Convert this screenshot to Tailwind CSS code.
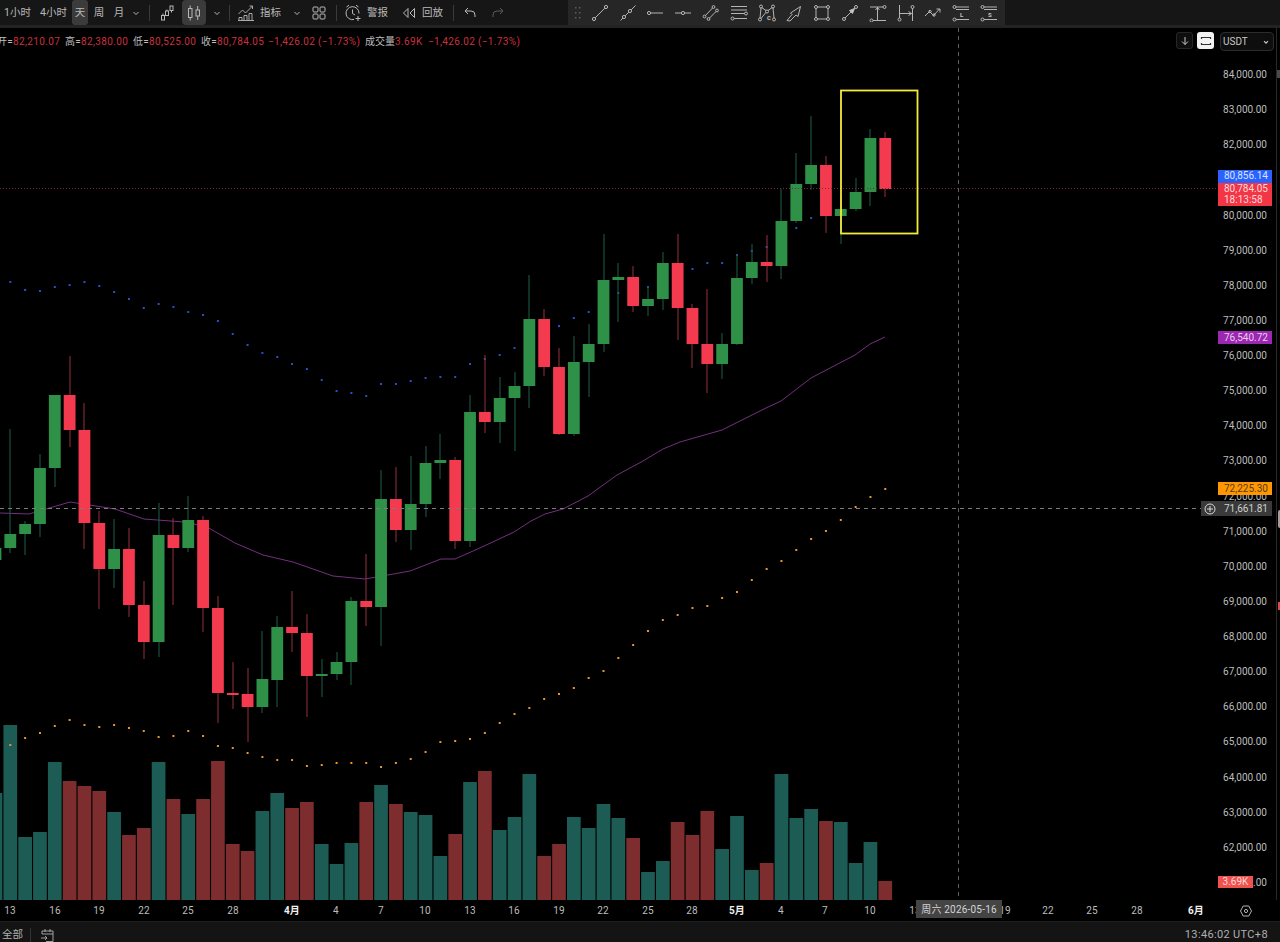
<!DOCTYPE html>
<html lang="en">

<head>
    <meta charset="UTF-8">
    <title>BTC chart</title>
    <script src="https://cdn.jsdelivr.net/npm/@tailwindcss/browser@4"></script>
</head>

<body class="bg-black">
    <div class="relative w-[1280px] h-[942px] overflow-hidden bg-black flex flex-col font-['Roboto','Noto_Sans_CJK_SC',sans-serif] text-[#b8b8b8]">

        <!-- top toolbar -->
        <header class="h-[28px] shrink-0 bg-[#161616] border-b-[3px] border-[#232323] flex items-start text-[10.5px] leading-[25px]">
            <div class="w-[568px] h-[25px] flex items-center pl-[4px]">
                <span class="w-[26px] whitespace-nowrap">1小时</span>
                <span class="ml-[10px] w-[26px] whitespace-nowrap">4小时</span>
                <span class="ml-[6px] w-[16px] h-[25px] bg-[#3b3b3b] rounded-[3px] text-center">天</span>
                <span class="ml-[4px] w-[14px] text-center">周</span>
                <span class="ml-[6px] w-[14px] text-center">月</span>
                <svg class="ml-[5px] w-[10px] h-[10px]" viewBox="0 0 10 10" fill="none" stroke="currentColor"><path d="M2.5 4l2.5 2.5L7.5 4" /></svg>
                <span class="ml-[8px] w-px h-[16px] bg-[#3a3a3a]"></span>
                <svg class="ml-[9px] w-[16px] h-[18px]" viewBox="0 0 16 18" fill="none" stroke="currentColor">
                    <rect x="2.5" y="11.5" width="3" height="4.5" /><rect x="6.5" y="7" width="3" height="4.5" /><rect x="11" y="2" width="3" height="4.5" /><path d="M4 11.5V9.5M8 7V5.5M12.5 6.5v2" />
                </svg>
                <span class="ml-[7px] w-[24px] h-[25px] bg-[#3b3b3b] rounded-[4px] flex items-center justify-center">
                    <svg class="w-[14px] h-[18px]" viewBox="0 0 14 18" fill="none" stroke="currentColor">
                        <rect x="1.5" y="4.5" width="3.5" height="9" /><path d="M3.2 1.5v3M3.2 13.5v3" /><rect x="9" y="6" width="3.5" height="6" /><path d="M10.7 2v4M10.7 12v4" />
                    </svg>
                </span>
                <svg class="ml-[6px] w-[10px] h-[10px]" viewBox="0 0 10 10" fill="none" stroke="currentColor"><path d="M2.5 4l2.5 2.5L7.5 4" /></svg>
                <span class="ml-[7px] w-px h-[16px] bg-[#3a3a3a]"></span>
                <svg class="ml-[7px] w-[18px] h-[18px]" viewBox="0 0 18 18" fill="none" stroke="currentColor" stroke-width="0.9">
                    <path d="M1.5 10l4-4 3 3 7-7M12.5 2h3v3" /><path d="M2 16.5v-3h3v3M7 16.5v-5h3v5M12 16.5v-7h3v7M1 16.5h16" />
                </svg>
                <span class="ml-[5px] w-[20px] whitespace-nowrap">指标</span>
                <svg class="ml-[12px] w-[10px] h-[10px]" viewBox="0 0 10 10" fill="none" stroke="currentColor"><path d="M2.5 4l2.5 2.5L7.5 4" /></svg>
                <svg class="ml-[10px] w-[14px] h-[14px]" viewBox="0 0 14 14" fill="none" stroke="currentColor">
                    <rect x="1" y="1" width="5" height="5" rx="1" /><rect x="8" y="1" width="5" height="5" rx="1" /><rect x="1" y="8" width="5" height="5" rx="1" /><rect x="8" y="8" width="5" height="5" rx="1" />
                </svg>
                <span class="ml-[10px] w-px h-[16px] bg-[#3a3a3a]"></span>
                <svg class="ml-[7px] w-[18px] h-[18px]" viewBox="0 0 18 18" fill="none" stroke="currentColor">
                    <path d="M10 15.5A6.5 6.5 0 1 1 15 9.5" /><path d="M8.5 5.5v4l2.5 1.5M2.5 3L5 1.2M14.5 3L12 1.2M14 12v5M11.5 14.5h5" />
                </svg>
                <span class="ml-[5px] w-[20px] whitespace-nowrap">警报</span>
                <svg class="ml-[15px] w-[14px] h-[14px]" viewBox="0 0 14 14" fill="none" stroke="currentColor">
                    <path d="M6 2.5L1.5 7 6 11.5zM12.5 2.5L8 7l4.5 4.5z" />
                </svg>
                <span class="ml-[6px] w-[20px] whitespace-nowrap">回放</span>
                <span class="ml-[11px] w-px h-[16px] bg-[#3a3a3a]"></span>
                <svg class="ml-[9px] w-[14px] h-[14px]" viewBox="0 0 14 14" fill="none" stroke="currentColor">
                    <path d="M5 2L2 5l3 3M2 5h6a4 4 0 0 1 4 4v2" />
                </svg>
                <svg class="ml-[14px] w-[14px] h-[14px] text-[#5a5a5a]" viewBox="0 0 14 14" fill="none" stroke="currentColor">
                    <path d="M9 2l3 3-3 3M12 5H6a4 4 0 0 0-4 4v2" />
                </svg>
            </div>

            <!-- drawing tools -->
            <div class="w-[437px] h-[25px] bg-[#262626] flex items-center text-[#c4c4c4]">
                <svg class="w-[18px] h-[14px] text-[#5e5e5e]" viewBox="0 0 18 14" fill="currentColor">
                    <rect x="7" y="1" width="1.5" height="1.5" /><rect x="11" y="1" width="1.5" height="1.5" /><rect x="7" y="6" width="1.5" height="1.5" /><rect x="11" y="6" width="1.5" height="1.5" /><rect x="7" y="11" width="1.5" height="1.5" /><rect x="11" y="11" width="1.5" height="1.5" />
                </svg>
                <div class="flex items-center">
                    <span class="w-[27.8px] flex justify-center"><svg class="w-[18px] h-[18px]" viewBox="0 0 18 18" fill="none" stroke="currentColor" stroke-width="0.9"><circle cx="3" cy="15" r="1.6" /><circle cx="15" cy="3" r="1.6" /><path d="M4.2 13.8L13.8 4.2" /></svg></span>
                    <span class="w-[27.8px] flex justify-center"><svg class="w-[18px] h-[18px]" viewBox="0 0 18 18" fill="none" stroke="currentColor" stroke-width="0.9"><circle cx="5" cy="13" r="1.6" /><circle cx="11" cy="7" r="1.6" /><path d="M1.5 16.5L3.9 14.1M6.2 11.8L9.8 8.2M12.2 5.8L16.5 1.5" /></svg></span>
                    <span class="w-[27.8px] flex justify-center"><svg class="w-[18px] h-[18px]" viewBox="0 0 18 18" fill="none" stroke="currentColor" stroke-width="0.9"><circle cx="3" cy="9" r="1.6" /><path d="M4.6 9H17" /></svg></span>
                    <span class="w-[27.8px] flex justify-center"><svg class="w-[18px] h-[18px]" viewBox="0 0 18 18" fill="none" stroke="currentColor" stroke-width="0.9"><circle cx="9" cy="9" r="1.6" /><path d="M1 9h6.4M10.6 9H17" /></svg></span>
                    <span class="w-[27.8px] flex justify-center"><svg class="w-[18px] h-[18px]" viewBox="0 0 18 18" fill="none" stroke="currentColor" stroke-width="0.9"><circle cx="2.5" cy="12.5" r="1.4" /><circle cx="11.5" cy="3" r="1.4" /><circle cx="6.5" cy="15" r="1.4" /><circle cx="15" cy="6.5" r="1.4" /><path d="M3.5 11.5l7-7.5M7.6 14l6.4-6.5" /></svg></span>
                    <span class="w-[27.8px] flex justify-center"><svg class="w-[18px] h-[18px]" viewBox="0 0 18 18" fill="none" stroke="currentColor" stroke-width="0.9"><path d="M1 2.5h16M1 6h16M1 9.5h13.5M4 14.5h13" /><circle cx="16" cy="9.5" r="1.5" /><circle cx="2.5" cy="14.5" r="1.5" /></svg></span>
                    <span class="w-[27.8px] flex justify-center"><svg class="w-[18px] h-[18px]" viewBox="0 0 18 18" fill="none" stroke="currentColor" stroke-width="0.9"><circle cx="3" cy="2.5" r="1.5" /><circle cx="15" cy="2.5" r="1.5" /><circle cx="2" cy="15.5" r="1.5" /><circle cx="16" cy="15.5" r="1.5" /><circle cx="9" cy="7.5" r="1.5" /><path d="M3 4l-1 10M3.8 3.6L8 6.5M14.2 3.6L10 6.5M15 4l1 10M7.8 8.5L3 14.5" /><text x="9" y="15.5" fill="currentColor" stroke="none" font-size="6" font-weight="700">C</text></svg></span>
                    <span class="w-[27.8px] flex justify-center"><svg class="w-[18px] h-[18px]" viewBox="0 0 18 18" fill="none" stroke="currentColor" stroke-width="0.9"><path d="M2 16.5L7 10.5 5.5 9 15.5 2.5 13 12.5 11 11 5 17z" /></svg></span>
                    <span class="w-[27.8px] flex justify-center"><svg class="w-[18px] h-[18px]" viewBox="0 0 18 18" fill="none" stroke="currentColor" stroke-width="0.9"><rect x="3" y="3" width="12" height="12" /><circle cx="3" cy="3" r="1.5" fill="#262626" /><circle cx="15" cy="3" r="1.5" fill="#262626" /><circle cx="3" cy="15" r="1.5" fill="#262626" /><circle cx="15" cy="15" r="1.5" fill="#262626" /></svg></span>
                    <span class="w-[27.8px] flex justify-center"><svg class="w-[18px] h-[18px]" viewBox="0 0 18 18" fill="none" stroke="currentColor" stroke-width="0.9"><circle cx="3" cy="15" r="1.5" /><circle cx="15" cy="3" r="1.5" /><path d="M4 14L13.5 4.5" /><path d="M8.5 6.5l5-2-2 5z" fill="currentColor" /></svg></span>
                    <span class="w-[27.8px] flex justify-center"><svg class="w-[18px] h-[18px]" viewBox="0 0 18 18" fill="none" stroke="currentColor" stroke-width="0.9"><path d="M1 3h13M4 16.5h13M8.5 3v13M6.5 6l2-2.5 2 2.5" /><circle cx="15.5" cy="3" r="1.5" /><circle cx="2.5" cy="16.5" r="1.5" /></svg></span>
                    <span class="w-[27.8px] flex justify-center"><svg class="w-[18px] h-[18px]" viewBox="0 0 18 18" fill="none" stroke="currentColor" stroke-width="0.9"><path d="M2.5 1v13M15.5 4.5V17M2.5 9.5h12M11.5 7.5l3 2-3 2" /><circle cx="2.5" cy="15.5" r="1.5" /><circle cx="15.5" cy="3" r="1.5" /></svg></span>
                    <span class="w-[27.8px] flex justify-center"><svg class="w-[18px] h-[18px]" viewBox="0 0 18 18" fill="none" stroke="currentColor" stroke-width="0.9"><path d="M1 12L5.5 7.5 9.5 11.5 15.5 5M12.5 5h3.5v3.5" /><circle cx="6" cy="7.5" r="1.2" /><circle cx="10" cy="11" r="1.2" /></svg></span>
                    <span class="w-[27.8px] flex justify-center"><svg class="w-[18px] h-[18px]" viewBox="0 0 18 18" fill="none" stroke="currentColor" stroke-width="0.9"><path d="M4 3h13M4 5.5h13M4 15.5h13" /><circle cx="2.5" cy="3" r="1.5" /><circle cx="2.5" cy="15.5" r="1.5" /><text x="8" y="12.5" fill="currentColor" stroke="none" font-size="6" font-weight="700">L</text></svg></span>
                    <span class="w-[27.8px] flex justify-center"><svg class="w-[18px] h-[18px]" viewBox="0 0 18 18" fill="none" stroke="currentColor" stroke-width="0.9"><path d="M4 3h13M4 5.5h13M4 15.5h13" /><circle cx="2.5" cy="3" r="1.5" /><circle cx="2.5" cy="15.5" r="1.5" /><text x="8" y="12.5" fill="currentColor" stroke="none" font-size="6" font-weight="700">S</text></svg></span>
                </div>
            </div>
        </header>

        <!-- chart -->
        <main class="relative h-[872px] shrink-0 border-r border-[#2a2a2a] w-[1277px]">
            <svg id="chart" class="absolute top-0 left-0" width="1276" height="872" viewBox="0 28 1276 872"></svg>

            <!-- OHLC line -->
            <div class="absolute top-[7px] left-[-3px] flex items-center h-[12px] whitespace-nowrap text-[10px] text-[#bdbdbd] tracking-[0.35px]">
                <span class="w-[16px]">开=</span><span class="w-[52px] text-[#c9303f]">82,210.07</span>
                <span class="w-[16px]">高=</span><span class="w-[52px] text-[#c9303f]">82,380.00</span>
                <span class="w-[16px]">低=</span><span class="w-[52px] text-[#c9303f]">80,525.00</span>
                <span class="w-[16px]">收=</span><span class="w-[51px] text-[#c9303f]">80,784.05</span>
                <span class="w-[97px] text-[#c9303f]">−1,426.02 (−1.73%)</span>
                <span class="w-[30px] tracking-normal">成交量</span><span class="w-[33px] text-[#c9303f]">3.69K</span>
                <span class="text-[#c9303f]">−1,426.02 (−1.73%)</span>
            </div>

            <!-- price axis labels -->
            <div id="price-axis" class="absolute top-[29px] left-[1200px] w-[67px] flex flex-col text-[10px] text-right text-[#bdbdbd]"></div>

            <!-- buttons over the axis -->
            <div class="absolute top-[4px] left-[1176px] flex items-start">
                <span class="w-[17px] h-[17px] rounded-[3px] border border-[#262626] bg-[#0e0e0e] flex items-center justify-center">
                    <svg class="w-[10px] h-[10px]" viewBox="0 0 10 10" fill="none" stroke="#c8c8c8"><path d="M5 1v7.5M2 5.5l3 3 3-3" /></svg>
                </span>
                <span class="ml-[4px] w-[17px] h-[17px] rounded-[3px] bg-[#f2f2f2] flex items-center justify-center">
                    <svg class="w-[12px] h-[12px]" viewBox="0 0 12 12" fill="none" stroke="#333"><path d="M1.5 4V2.5h9V4M1.5 8v1.5h9V8" stroke-width="1.2" /></svg>
                </span>
                <span class="ml-[6px] w-[54px] h-[19px] rounded-[4px] border border-[#2c2c2c] bg-[#0e0e0e] flex items-center justify-between pl-[2px] pr-[3px] text-[10px] text-[#c8c8c8]">USDT
                    <svg class="w-[8px] h-[8px]" viewBox="0 0 10 10" fill="none" stroke="currentColor" stroke-width="1.4"><path d="M2.5 4l2.5 2.5L7.5 4" /></svg>
                </span>
            </div>

            <!-- price tags -->
            <span class="absolute top-[142px] left-[1218px] w-[54px] h-[12.5px] bg-[#2962ff] text-[10px] leading-[12.5px] pl-[6px] text-[#d9e2ff]">80,856.14</span>
            <span class="absolute top-[154.5px] left-[1218px] w-[54px] h-[23px] bg-[#f23645] text-[10px] leading-[11px] pt-[0.5px] text-[#ffd9dc] pl-[6px]">80,784.05<br>18:13:58</span>
            <span class="absolute top-[303px] left-[1218px] w-[54px] h-[13px] bg-[#9c27b0] text-[10px] leading-[13px] pl-[6px] text-[#e8cdee]">76,540.72</span>
            <span class="absolute top-[454px] left-[1218px] w-[54px] h-[13px] bg-[#ff9800] text-[10px] leading-[13px] pl-[6px] text-[#5a3a10]">72,225.30</span>
            <span class="absolute top-[473px] left-[1201px] w-[71px] h-[15px] bg-[#3a3a3a] flex items-center text-[10px] text-[#d0d0d0]">
                <span class="w-[17px] flex justify-center">
                    <svg class="w-[12px] h-[12px]" viewBox="0 0 12 12" fill="none" stroke="#d8d8d8"><circle cx="6" cy="6" r="5" /><path d="M6 3v6M3 6h6" /></svg>
                </span>
                <span class="ml-[6px]">71,661.81</span>
            </span>
            <span class="absolute top-[848px] left-[1218px] w-[35px] h-[12px] bg-[#ef5350] text-[10px] leading-[12px] text-center text-[#ffd9d8]">3.69K</span>
        </main>

        <!-- right edge sliver -->
        <span class="absolute left-[1277px] top-[70px] w-[3px] h-[8px] bg-[#4a4a4a]"></span>
        <span class="absolute left-[1278px] top-[510px] w-[2px] h-[18px] bg-[#a89a9a] rounded-l-[2px]"></span>
        <span class="absolute left-[1278px] top-[602px] w-[2px] h-[8px] bg-[#d94a50]"></span>

        <!-- time axis -->
        <div id="time-axis" class="relative h-[21px] shrink-0 text-[10px] leading-[22px] text-[#bdbdbd] tracking-[0.2px]">
            <span class="absolute top-0 left-[916px] w-[86px] h-[18px] bg-[#444] text-center leading-[20px] text-[#d4d4d4] whitespace-nowrap z-10">周六 2026-05-16</span>
            <svg class="absolute top-[5px] left-[1240px] w-[12px] h-[12px]" viewBox="0 0 12 12" fill="none" stroke="#b5b5b5"><path d="M3.2 1h5.6L11.5 6 8.8 11H3.2L.5 6z" /><circle cx="6" cy="6" r="1.6" /></svg>
        </div>

        <!-- bottom bar -->
        <footer class="h-[21px] shrink-0 bg-[#141414] border-t border-[#1e1e1e] flex items-center pt-[6px] pl-[2px] pr-[12px] text-[11px] text-[#b0b0b0]">
            <span class="w-[20px] text-[10.5px] whitespace-nowrap">全部</span>
            <span class="ml-[8px] w-px h-[14px] bg-[#333]"></span>
            <svg class="ml-[9px] w-[15px] h-[15px]" viewBox="0 0 15 15" fill="none" stroke="currentColor" stroke-width="0.9"><path d="M2 6V3h11v10.5H6M5 1v3M10 1v3M1 10h6M5 8l2 2-2 2M2 6h11" /></svg>
            <span class="ml-auto tracking-[0.35px]">13:46:02 UTC+8</span>
        </footer>
    </div>

    <script>
        const SVG_NS = 'http://www.w3.org/2000/svg';
        const chart = document.getElementById('chart');
        const STEP = 14.83;
        const RED = '#f33a4e', GREEN = '#2f9147', RED_WICK = '#94303c', GREEN_WICK = '#1c5f48';

        function xOf(i) { return 10.3 + STEP * i; }

        function add(tag, attrs) {
            const el = document.createElementNS(SVG_NS, tag);
            for (const k in attrs) el.setAttribute(k, attrs[k]);
            chart.appendChild(el);
            return el;
        }

        // volume: [top y, up?] starting at index -1
        const volume = [[793, 1], [725, 1], [837, 1], [832, 1], [762, 1], [781, 0], [786, 0], [791, 0], [812, 1], [835, 0], [828, 0],
        [762, 1], [799, 0], [814, 1], [799, 0], [761, 0], [844, 0], [851, 0], [811, 1], [793, 1], [808, 0], [802, 0],
        [844, 1], [864, 1], [843, 1], [802, 0], [785, 1], [804, 0], [812, 1], [815, 1], [856, 1], [834, 0], [782, 1],
        [771, 0], [830, 1], [817, 1], [774, 1], [856, 0], [844, 0], [817, 1], [828, 1], [804, 1], [818, 1], [838, 0],
        [872, 1], [861, 1], [822, 0], [835, 0], [811, 0], [849, 1], [816, 1], [870, 1], [863, 0], [774, 1], [818, 1],
        [809, 1], [821, 0], [822, 1], [863, 1], [842, 1], [881, 0]];
        volume.forEach(([top, up], n) => {
            add('rect', { x: xOf(n - 1) - 6.85, y: top, width: 13.7, height: 900 - top, fill: up ? '#1c5c54' : '#7e2d2e' });
        });

        // EMA line
        const ema = '0,513 29,514 46,509 70,502 115,509 144,519 184,522 207,527 235,543 263,555 293,562 333,576 365,579 410,571 441,559 455,559 482,547 514,532 531,521 545,514 563,509 588,496 617,475 643,461 663,449 680,442 722,430 766,408 781,401 811,378 855,355 870,344 885,337';
        add('polyline', { points: ema, fill: 'none', stroke: '#74307f', 'stroke-width': 1 });

        // [index, y]
        const blueDots = [282, 290, 291, 287, 285, 282, 286, 292, 299, 308, 304, 307, 312, 315, 321, 334, 345, 353, 357, 364, 369, 380, 391, 393, 396, 384, 384, 381, 378, 377, 377, 364, 359, 355, 348, 333, 330, 326, 318, 312, 300, 293, 290, 287, 283, 275, 269, 263, 263, 255, 251, 247, 240, 228, 218, 210];
        blueDots.forEach((y, i) => add('rect', { x: xOf(i) - 1, y: y - 1, width: 2, height: 2, fill: '#2d4fc4' }));

        const orangeDots = [745, 738, 733, 726, 720, 725, 727, 725, 728, 731, 737, 736, 731, 736, 746, 748, 753, 757, 760, 760, 766, 765, 763, 763, 763, 767, 763, 759, 752, 742, 741, 739, 733, 723, 714, 708, 699, 694, 688, 678, 671, 658, 645, 631, 620, 615, 608, 606, 598, 592, 580, 569, 561, 550, 539, 531, 520, 507, 497, 489];
        orangeDots.forEach((y, i) => add('rect', { x: xOf(i) - 1, y: y - 1, width: 2, height: 2, fill: '#e8952f' }));

        // candles: [body top, body bottom, wick top, wick bottom, up?] starting at index -1
        const candles = [
            [548, 560, 545, 565, 1], [534, 548, 429, 553, 1], [524, 534, 521, 555, 1], [468, 524, 454, 537, 1], [395, 468, 395, 487, 1],
            [395, 430, 356, 447, 0], [430, 523, 403, 549, 0], [523, 569, 511, 609, 0], [549, 569, 519, 588, 1], [549, 605, 528, 617, 0],
            [605, 642, 581, 659, 0], [535, 642, 503, 657, 1], [535, 548, 518, 605, 0], [520, 548, 496, 552, 1], [520, 608, 516, 632, 0],
            [608, 693, 596, 723, 0], [693, 694, 662, 709, 0], [694, 707, 668, 742, 0], [679, 707, 631, 713, 1], [627, 680, 616, 707, 1],
            [627, 633, 591, 652, 0], [633, 676, 614, 717, 0], [674, 676, 659, 697, 1], [662, 674, 652, 680, 1], [601, 662, 597, 685, 1],
            [601, 607, 554, 626, 0], [499, 607, 470, 646, 1], [499, 530, 467, 542, 0], [504, 530, 456, 550, 1], [463, 504, 446, 517, 1],
            [460, 463, 434, 479, 1], [460, 541, 457, 549, 0], [412, 541, 395, 547, 1], [412, 422, 355, 433, 0], [398, 422, 377, 443, 1],
            [386, 398, 372, 451, 1], [319, 386, 275, 408, 1], [319, 367, 309, 376, 0], [367, 434, 348, 435, 0], [362, 434, 336, 436, 1],
            [344, 362, 324, 397, 1], [280, 344, 234, 352, 1], [277, 280, 263, 322, 1], [277, 306, 266, 312, 0], [299, 306, 286, 316, 1],
            [263, 299, 252, 310, 1], [263, 308, 234, 340, 0], [308, 344, 304, 368, 0], [344, 364, 289, 393, 0], [344, 364, 333, 379, 1],
            [278, 344, 254, 345, 1], [262, 278, 244, 284, 1], [262, 266, 235, 282, 0], [221, 266, 189, 279, 1], [184, 221, 153, 223, 1],
            [165, 184, 116, 190, 1], [165, 216, 156, 233, 0], [209, 216, 197, 244, 1], [192, 209, 178, 211, 1], [138, 192, 129, 206, 1],
            [138, 189, 132, 197, 0]
        ];
        candles.forEach(([top, bottom, wickTop, wickBottom, up], n) => {
            const c = xOf(n - 1);
            add('rect', { x: Math.round(c) - 0.5, y: wickTop, width: 1, height: wickBottom - wickTop, fill: up ? GREEN_WICK : RED_WICK });
            add('rect', { x: c - 5.9, y: top, width: 11.8, height: Math.max(bottom - top, 2), fill: up ? GREEN : RED });
        });

        // last price line, crosshair, highlight box
        add('line', { x1: 0, y1: 188.5, x2: 1218, y2: 188.5, stroke: '#7a2a33', 'stroke-width': 1, 'stroke-dasharray': '1 2' });
        add('line', { x1: 0, y1: 508.5, x2: 1201, y2: 508.5, stroke: '#7c7c7c', 'stroke-width': 1, 'stroke-dasharray': '4 4' });
        add('line', { x1: 958.5, y1: 28, x2: 958.5, y2: 900, stroke: '#5e5e5e', 'stroke-width': 1, 'stroke-dasharray': '4 4' });
        add('rect', { x: 841, y: 90.5, width: 76.5, height: 143, fill: 'none', stroke: '#f4ea3a', 'stroke-width': 1.8 });

        // price labels
        const priceAxis = document.getElementById('price-axis');
        for (let p = 84; p >= 61; p--) {
            const row = document.createElement('div');
            row.className = 'h-[35.13px] leading-[35.13px]';
            row.textContent = p + ',000.00';
            priceAxis.appendChild(row);
        }

        // date labels
        const timeAxis = document.getElementById('time-axis');
        const dates = [[10, '13'], [55, '16'], [99, '19'], [144, '22'], [188, '25'], [233, '28'], [292, '4月', 1], [336, '4'], [381, '7'], [425, '10'], [470, '13'], [514, '16'], [559, '19'], [603, '22'], [648, '25'], [692, '28'], [737, '5月', 1], [781, '4'], [825, '7'], [870, '10'], [915, '13'], [1005, '19'], [1048, '22'], [1092, '25'], [1137, '28'], [1196, '6月', 1]];
        dates.forEach(([x, text, bold]) => {
            const label = document.createElement('span');
            label.className = bold ? 'absolute top-0 -translate-x-1/2 font-bold text-[#f0f0f0]' : 'absolute top-0 -translate-x-1/2';
            label.style.left = x + 'px';
            label.textContent = text;
            timeAxis.appendChild(label);
        });
    </script>
</body>
</html>
